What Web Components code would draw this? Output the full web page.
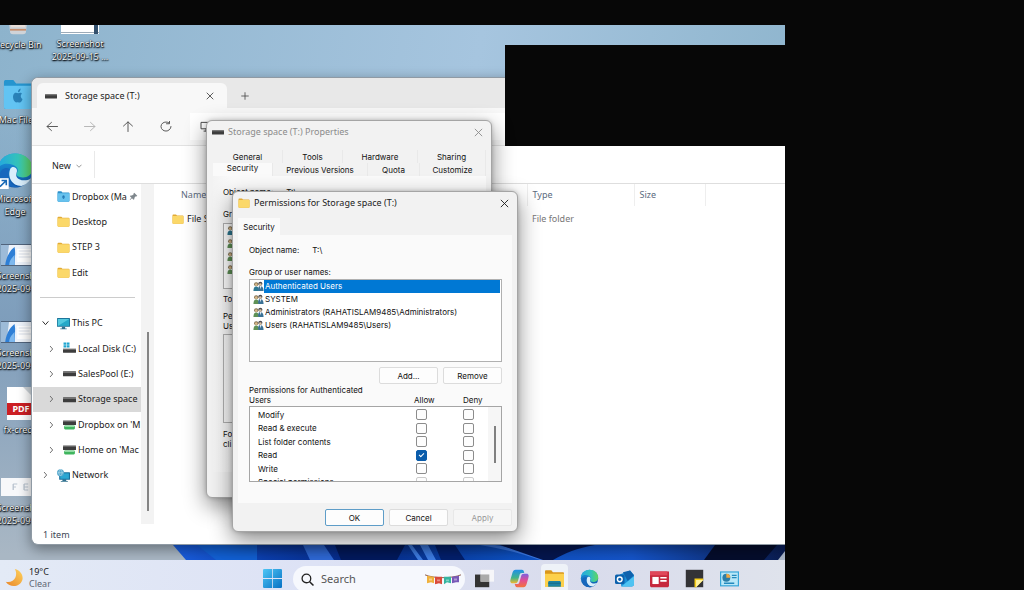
<!DOCTYPE html>
<html lang="en">
<head>
<meta charset="utf-8">
<title>Storage space (T:)</title>
<style>
  html, body { margin: 0; height: 100%; background: #070707; }
  body {
    --ui: "Noto Sans", "Open Sans", sans-serif;
    --classic: Inter, "Liberation Sans", Arial, sans-serif;
    font: 9px/12px var(--ui); color: #1b1b1b; overflow: hidden;
  }
</style>
</head>
<body>
<remote-session></remote-session>

<script>
const define = (name, html, setup) => {
  const tpl = document.createElement('template');
  customElements.define(name, class extends HTMLElement {
    connectedCallback() {
      if (this.shadowRoot) return;
      const root = this.attachShadow({ mode: 'open' });
      tpl.innerHTML = typeof html === 'function' ? html(this) : html;
      root.append(tpl.content.cloneNode(true));
      if (setup) setup(root, this);
    }
  });
};

const edge = `<defs><linearGradient id="a" x1="0" y1="0" x2="1" y2="0"><stop offset="0" stop-color="#23a7e0"/><stop offset=".6" stop-color="#35c4b8"/><stop offset="1" stop-color="#62d65b"/></linearGradient><linearGradient id="b" x1="0" y1="0" x2="0" y2="1"><stop offset="0" stop-color="#1b9de2"/><stop offset="1" stop-color="#0f54a6"/></linearGradient></defs>
<circle cx="12" cy="12" r="11" fill="url(#b)"/><path d="M1.200 10.500C2 4.500 6.500 1 12 1c6.500 0 11 4.500 11 9.500 0 4-3 6-6 6-3.500 0-4.500-1.500-4-2.500 1-1.500 1-3-.2-4.200C11 7.500 4 6 1.200 10.500z" fill="url(#a)"/><path d="M9 11c-2 5 1 11 7 11 2.500-.7 4.500-2.200 5.800-4.500-3 1.500-8 1.200-9-2-.4-1.500.8-2.500.4-4C12.500 9.500 10 9 9 11z" fill="#d9eefb"/><path d="M8.700 11C6 16 9 22 15 22.600 10 24 3 21 2.500 14.500 3 11 6 9.500 8.700 11z" fill="#1767bd"/>`;
const folder = `<path d="M1 4.500C1 3.500 1.500 3 2.500 3H8l2 2h11.500c1 0 1.500.5 1.500 1.500V20c0 1-.5 1.500-1.500 1.500h-19C1.500 21.500 1 21 1 20z" fill="#e3ab35"/><path d="M1 7.500C1 6.500 1.500 6 2.500 6h19c1 0 1.500.5 1.500 1.500V20c0 1-.5 1.500-1.500 1.500h-19C1.500 21.500 1 21 1 20z" fill="#fbd869"/>`;
const thumb = `<rect width="28" height="22" fill="#eef3fa"/><path d="M0 0h6L4 22H0z" fill="#9dbbd8"/><path d="M3 22C4 10 8 5 10 3c1 6 0 12 0 19z" fill="#2e7fd6"/><path d="M6 22c0-6 2-8 4-11v11z" fill="#7db8ee"/><path d="M12 5h14v13H12z" fill="#fff"/><path d="M13 7h12M13 10h8M13 13h10" stroke="#d9e0ea"/><path d="M0 .5h28M0 21.500h28" stroke="#51647c"/>`;
const stroke = (d, c = '#333', w = 1.5) => `<path d="${d}" fill="none" stroke="${c}" stroke-width="${w}" stroke-linecap="round" stroke-linejoin="round"/>`;
const people = c => `<circle cx="7" cy="7" r="4.500" fill="#7a6b4b"/><circle cx="7" cy="8" r="3" fill="#d8b88a"/><path d="M1 22c0-8 3-10 6-10s6 2 6 10z" fill="${c}"/><circle cx="16" cy="6" r="4.500" fill="#4b4a50"/><circle cx="16" cy="7.500" r="2.800" fill="#d9c1a0"/><path d="M11 20c0-7 2-9 5-9s7 2 7 11h-10z" fill="#3a7196"/><path d="M15 11l1.500 7 2-7z" fill="#e8eef4"/>`;
const ICONS = {
  drive: ['0 0 24 24', `<rect x="0" y="8" width="24" height="9" rx="1" fill="#3d3d3d"/><path d="M0 9.500h24" stroke="#8d8d8d" stroke-width="2"/>`],
  sysdrive: ['0 0 24 24', `<path d="M1 1h5v4H1zM7 1h5v4H7zM1 6h5v4H1zM7 6h5v4H7z" fill="#1fa5cf"/><rect y="13" width="24" height="7" rx="1" fill="#3d3d3d"/><path d="M0 13h24" stroke="#8d8d8d" stroke-width="2"/>`],
  netdrive: ['0 0 24 24', `<rect y="5" width="24" height="8" rx="1" fill="#3d3d3d"/><path d="M0 5.500h24" stroke="#8d8d8d" stroke-width="2"/><rect x="2" y="14" width="20" height="7" rx="2" fill="#3fb55e"/><path d="M3 15.500h18" stroke="#97dca8" stroke-width="2"/>`],
  folder: ['0 0 24 24', folder],
  dropbox: ['0 0 24 24', `<path d="M1 4c0-1 .5-1.500 1.500-1.500H8l2 2h11.500c1 0 1.500.5 1.500 1.500v14c0 1-.5 1.500-1.500 1.500h-19C1.500 21.500 1 21 1 20z" fill="#2b8fc9"/><path d="M1 6h22v14c0 1-.5 1.500-1.500 1.500h-19C1.500 21.500 1 21 1 20z" fill="#67c2ee"/><path d="M12 9.500l3 2-3 2-3-2zM9 14l3-1 3 1-3 2.500z" fill="#2277b3"/>`],
  pc: ['0 0 24 24', `<path d="M9 18h6v3h3v1.500H6V21h3z" fill="#31718f"/><rect x="0" y="2" width="24" height="16" rx="1" fill="#1d6f95"/><path d="M1.500 3.500h21v13h-21z" fill="#25a9c8"/><path d="M1.500 3.500h21l-21 13z" fill="#54cadf"/>`],
  network: ['0 0 24 24', `<path d="M10 19h7v3h3v1.500H7V22h3z" fill="#31718f"/><rect x="4" y="6" width="20" height="14" rx="1" fill="#196f9c"/><path d="M6 8h16v10H6z" fill="#2ba6d2"/><circle cx="6.500" cy="7" r="6.500" fill="#55a7cc"/><path d="M1 7h11M6.500 1c-4 4-4 8 0 12M6.500 1c4 4 4 8 0 12" stroke="#c7e8f3" fill="none"/>`],
  pin: ['0 0 24 24', `<path d="M14 2l8 8-2 2-2-.5-3.500 4L14 19l-2 1.500-4-4L3 21l-1-1 4.500-5-4-4L4 9l4 .2L12.500 6 12 4z" fill="#7e868c"/>`],
  usersBlue: ['0 0 24 24', people('#2d7891')],
  users: ['0 0 24 24', people('#5f9156')],
  close: ['0 0 24 24', stroke('M3 3l18 18M21 3L3 21', 'currentColor', 2.4)],
  plus: ['0 0 24 24', stroke('M12 2v20M2 12h20', '#444', 2.4)],
  back: ['0 0 24 24', stroke('M23 12H2M11 3l-9 9 9 9', '#555', 2)],
  forward: ['0 0 24 24', stroke('M1 12h21M13 3l9 9-9 9', '#b5b5b5', 2)],
  up: ['0 0 24 24', stroke('M12 23V2M3 11l9-9 9 9', '#555', 2)],
  refresh: ['0 0 24 24', stroke('M22 12a10 10 0 1 1-4-8M19 0v6h-6', '#555', 2)],
  screen: ['0 0 24 24', stroke('M23 3H2v14h21M8 22h12M12 17v5', '#444', 2)],
  chevDown: ['0 0 24 24', stroke('M3 8l9 9 9-9', 'currentColor', 3)],
  chevRight: ['0 0 24 24', stroke('M8 4l8 8-8 8', '#666', 3)],
  edge: ['0 0 24 24', edge],
  edgeLink: ['0 0 24 24', edge + `<rect x="1" y="17" width="7" height="7" fill="#fff"/><path d="M2.500 22.500L6.500 18.500M3.500 18.500h3v3" fill="none" stroke="#1768b5"/>`],
  thumb: ['0 0 28 22', thumb],
  strip: ['0 0 28 22', `<path d="M0 2h28v18H0z" fill="#f7f8fa"/><path d="M9 8v6M9 8h3M9 11h2M17 8v6M17 8h3M17 11h3M17 14h3" stroke="#b9c3cf" fill="none"/>`],
  doc: ['0 0 38 22', `<path d="M0 0h38v22H0z" fill="#fff"/><path d="M0 20.500h38" stroke="#9dabb8"/><path d="M15 0h16v9H15z" fill="#e7eaee"/><path d="M33 0h4v22h-4z" fill="#33506d"/>`],
  bin: ['0 0 24 24', `<path d="M2 0h20l-2 20c0 2-1 3-3 3H7c-2 0-3-1-3-3z" fill="#cfd3d8"/><path d="M5 4h14v11H5z" fill="#e7dcd6"/><path d="M4 18h16" stroke="#c68d6c" stroke-width="2"/>`],
  mac: ['0 0 32 28', `<path d="M1 3c0-1.500.8-2 2-2h8l3 3h16c1.500 0 2 .8 2 2v19c0 1.500-.8 2-2 2H3c-1.500 0-2-.8-2-2z" fill="#2695cf"/><path d="M1 6h31v19c0 1.500-.8 2-2 2H3c-1.500 0-2-.8-2-2z" fill="#62c4f3"/><path d="M20 13c-1.500-1-3-.2-3.800-.2S13.500 12 12 13c-2 1.600-1.500 5 .3 7.200 1.200 1.500 2.200.7 3.600.7s2.500.8 3.700-.6c.7-.8 1-1.500 1.200-2.200-2.300-1-2.400-3.800-.3-4.900zM16 12c0-2 1.200-3.300 2.800-3.500 0 2-1.200 3.400-2.800 3.500z" fill="#2a82b8"/>`],
  moon: ['0 0 24 24', `<defs><linearGradient id="m" x1="1" y1="0" x2="0" y2="1"><stop offset="0" stop-color="#ffd35c"/><stop offset="1" stop-color="#e8862a"/></linearGradient></defs><path d="M13 0c8 2 12 9 10 15-3 9-16 11-22 2 6 1 11-1 13-6 1.500-4 1-8-1-11z" fill="url(#m)"/>`],
  start: ['0 0 24 24', `<defs><linearGradient id="s" x1="0" y1="0" x2="1" y2="1"><stop offset="0" stop-color="#4ec6f5"/><stop offset="1" stop-color="#0771c4"/></linearGradient></defs><path d="M1 0h10.500v11.500H0V1zM12.500 0H23l1 1v10.500H12.500zM0 12.500h11.500V24H1l-1-1zM12.500 12.500H24V23l-1 1H12.500z" fill="url(#s)"/>`],
  search: ['0 0 24 24', `<circle cx="10" cy="10" r="8" fill="none" stroke="#222" stroke-width="2.400"/><path d="M16 16l7 7" stroke="#222" stroke-width="2.800"/>`],
  bunting: ['0 0 38 14', `<path d="M1 2c9 4 27 4 36 0" stroke="#8a5a4a" fill="none"/><path d="M3 3l7 1v7l-3-1-4 1z" fill="#f0b13c"/><path d="M11 4h7v8l-3-1-4 1z" fill="#d94b3c"/><path d="M20 4h7v7l-4-1-3 2z" fill="#35b5a0"/><path d="M28 4l7-1v7l-3 0-4 1z" fill="#7859b8"/><path d="M5 6h3v2H5zM13 7h3v2h-3zM22 7h3v2h-3zM30 6h3v2h-3z" fill="#fff" opacity=".4"/>`],
  taskview: ['0 0 24 24', `<path d="M0 7h18v16H0z" fill="#333"/><path d="M7 1h17v15H7z" fill="#fafafa" opacity=".85"/><path d="M7 7h11v9H7z" fill="#aaa"/>`],
  copilot: ['0 0 24 24', `<defs><linearGradient id="c" x1="0" y1="0" x2="0" y2="1"><stop offset="0" stop-color="#1f8fe8"/><stop offset=".6" stop-color="#43b48a"/><stop offset="1" stop-color="#f3b72c"/></linearGradient><linearGradient id="d" x1="0" y1="0" x2="0" y2="1"><stop offset="0" stop-color="#7a5fe0"/><stop offset=".5" stop-color="#e24f93"/><stop offset="1" stop-color="#f4743b"/></linearGradient></defs><path d="M7 1h8c2 0 2.500 1.500 3 4h-3c-2 0-2.500 1-3 3l-2 7c-.7 2-1.500 3-4 3H3c-3 0-3-3-2-6l2-7c1-3 2-4 4-4z" fill="url(#c)"/><path d="M17 23H9c-2 0-2.500-1.500-3-4h3c2 0 2.500-1 3-3l2-7c.7-2 1.500-3 4-3h3c3 0 3 3 2 6l-2 7c-1 3-2 4-4 4z" fill="url(#d)"/>`],
  explorer: ['0 0 24 24', `<path d="M0 3c0-1 .5-1.500 1.500-1.500H8L10 4h12.500C23.500 4 24 4.500 24 5.500V22H0z" fill="#d9971b"/><path d="M0 6h24v16.500H0z" fill="#fcd04b"/><path d="M4 22.500V17c0-1.500.7-2 2-2h12c1.500 0 2 .7 2 2v5.500z" fill="#1c83a4"/><path d="M4 18h16" stroke="#15647e"/>`],
  outlook: ['0 0 24 24', `<path d="M6 7l13-5 5 6v11c0 2-1 3-3 3H8z" fill="#1a8fd6"/><path d="M8 22l16-13v10c0 2-1 3-3 3z" fill="#4fc3f2"/><path d="M10 4l9-2 5 6-8 7z" fill="#0f62ad"/><rect x="0" y="7" width="12" height="12" rx="2" fill="#0c61ad"/><circle cx="6" cy="13" r="3" fill="none" stroke="#fff" stroke-width="1.800"/>`],
  news: ['0 0 24 24', `<path d="M0 3h24v18c0 1-1 2-2 2H2c-1 0-2-1-2-2z" fill="#c6283d"/><path d="M0 3h22v5H0z" fill="#e0475a"/><path d="M3 10h8v9H3z" fill="#fff"/><path d="M13 11h8M13 15h8" stroke="#fff" stroke-width="2"/>`],
  notes: ['0 0 24 24', `<path d="M1 1h22v22H1z" fill="#333336"/><path d="M12 12h11v2l-9 9h-2z" fill="#f8cf1c"/><path d="M14 23v-9h9z" fill="#fff3a0"/>`],
  control: ['0 0 24 24', `<path d="M0 3h24v19H0z" fill="#36a5d8"/><path d="M1.500 4.500h21v16h-21z" fill="#b9e8f8"/><circle cx="8" cy="11" r="5" fill="#2c7ea8"/><path d="M8 11V6a5 5 0 0 1 5 5z" fill="#f0a640"/><path d="M15 8h6M15 11h6M5 18h13" stroke="#2489bd" stroke-width="1.600"/>`]
};

/* <ui-icon name="..."> : sized through width/height on the host */
define('ui-icon', el => {
  const [box, art] = ICONS[el.getAttribute('name')];
  return `<style>:host{display:block;flex:none;width:12px;height:12px}svg{display:block;width:100%;height:100%}</style>
  <svg viewBox="${box}" preserveAspectRatio="none" aria-hidden="true">${art}</svg>`;
});

define('desktop-icon', el => `<style>
  :host{display:flex;flex-direction:column;align-items:center;gap:3px;width:64px;text-align:center;color:#f4f7fa;font-size:9px;line-height:13px;
    text-shadow:0 0 1px #000,0 1px 2px #000,1px 1px 1px #234}
  ui-icon{width:${el.getAttribute('w')}px;height:${el.getAttribute('h')}px}
  .art{position:relative;display:block}
  b{position:absolute;left:0;right:0;top:16px;background:#cc1f24;color:#fff;font:700 9px/12px var(--ui);text-shadow:none}
  .paper{width:28px;height:33px;background:linear-gradient(225deg,#cfd5da 8px,#fff 9px)}
  span{white-space:pre-line}
</style><div class="art">${el.getAttribute('icon') === 'pdf' ? '<div class="paper"></div><b>PDF</b>' : `<ui-icon name="${el.getAttribute('icon')}"></ui-icon>`}</div><span><slot></slot></span>`);

define('nav-row', el => `<style>
  :host{display:flex;align-items:center;overflow:hidden;white-space:nowrap;padding-left:${el.hasAttribute('child') ? 15 : 9}px}
  :host([selected]){background:#d9d9d9}
  .chev{flex:none;width:7px;height:8px;margin-right:8px}
  ui-icon[name="chevDown"]{color:#222}
  a{color:inherit;text-decoration:none;display:flex;align-items:center;gap:2px}
  .main{width:13px;height:13px}
  .pin{width:9px;height:9px}
</style>${el.getAttribute('chev') ? `<ui-icon class="chev" name="${el.getAttribute('chev')}"></ui-icon>` : '<i class="chev"></i>'}
<a href="#"><ui-icon class="main" name="${el.getAttribute('icon')}"></ui-icon><slot></slot>${el.hasAttribute('pinned') ? '<ui-icon class="pin" name="pin"></ui-icon>' : ''}</a>`);

define('explorer-window', `<style>
  :host{display:flex;flex-direction:column;background:#fff;border-radius:7px 0 0 7px;overflow:hidden;box-sizing:border-box;
    border:1px solid #8f9aa4;border-right:0;box-shadow:0 4px 14px #0006}
  button{border:0;background:none;padding:0;font:inherit;color:inherit}
  .tabs{display:flex;background:#e8e8e8;height:30px;align-items:flex-end}
  .tab{display:flex;align-items:center;height:25px;width:190px;margin-left:5px;background:#f8f8f8;border-radius:6px 6px 0 0;box-sizing:border-box;padding:0 13px 0 8px}
  .tab span{flex:1;margin-left:8px}
  .tab ui-icon[name=close]{width:8px;height:8px;color:#333}
  .add{height:25px;padding-left:14px}
  .add ui-icon{width:8px;height:8px}
  .nav{display:flex;align-items:center;height:37px;background:#f8f8f8;border-bottom:1px solid #e2e2e2;padding-left:14px;gap:26px}
  .nav ui-icon{width:12px;height:11px}
  .addr{flex:1;height:27px;margin-left:-8px;padding-left:10px;background:#fff;display:flex;align-items:center}
  .cmd{display:flex;height:37px;border-bottom:1px solid #dedede;align-items:center;padding-left:19px}
  .cmd button{display:flex;gap:5px;align-items:center;padding:2px 12px 0 1px;height:27px;box-sizing:border-box;border-right:1px solid #e9e9e9}
  .cmd ui-icon{width:6px;height:6px;color:#777}
  .body{display:flex;flex:1;min-height:0}
  nav{display:grid;grid-auto-rows:1fr;width:108px;height:304px;margin-left:1px;flex:none}
  hr{width:95px;margin:auto 0 auto 7px;border:0;border-top:1px solid #ccc}
  .track{width:13px;flex:none;background:#f3f3f3;display:flex;justify-content:center;padding:148px 0 13px;box-sizing:border-box}
  .track i{width:2px;background:#858585}
  .files{flex:1;padding-left:1px}
  table{border-collapse:collapse;table-layout:fixed;width:100%}
  th{font-weight:400;text-align:left;color:#5c6b80;height:22px;padding:0 5px;border-right:1px solid #eee}
  th:last-child{border:0}
  td{height:26px;padding:0 5px;color:#777}
  th:first-child{padding-left:26px}
  td:first-child{padding-left:17px;color:#222}
  td div{display:flex;gap:3px;align-items:center}
  footer{height:20px;padding:2px 0 0 11px;box-sizing:border-box;color:#3d4654;line-height:18px}
</style>
<div class="tabs"><div class="tab"><ui-icon name="drive"></ui-icon><span>Storage space (T:)</span><button aria-label="Close tab"><ui-icon name="close"></ui-icon></button></div>
<button class="add" aria-label="New tab"><ui-icon name="plus"></ui-icon></button></div>
<div class="nav"><button aria-label="Back"><ui-icon name="back"></ui-icon></button><button aria-label="Forward"><ui-icon name="forward"></ui-icon></button><button aria-label="Up"><ui-icon name="up"></ui-icon></button><button aria-label="Refresh"><ui-icon name="refresh"></ui-icon></button><div class="addr"><ui-icon name="screen"></ui-icon></div></div>
<div class="cmd"><button>New <ui-icon name="chevDown"></ui-icon></button></div>
<div class="body">
  <nav>
    <nav-row icon="dropbox" pinned>Dropbox (Ma</nav-row>
    <nav-row icon="folder">Desktop</nav-row>
    <nav-row icon="folder">STEP 3</nav-row>
    <nav-row icon="folder">Edit</nav-row>
    <hr>
    <nav-row icon="pc" chev="chevDown">This PC</nav-row>
    <nav-row child icon="sysdrive" chev="chevRight">Local Disk (C:)</nav-row>
    <nav-row child icon="drive" chev="chevRight">SalesPool (E:)</nav-row>
    <nav-row child icon="drive" chev="chevRight" selected>Storage space</nav-row>
    <nav-row child icon="netdrive" chev="chevRight">Dropbox on 'M</nav-row>
    <nav-row child icon="netdrive" chev="chevRight">Home on 'Mac</nav-row>
    <nav-row icon="network" chev="chevRight">Network</nav-row>
  </nav>
  <div class="track"><i></i></div>
  <div class="files"><table>
    <colgroup><col style="width:372px"><col style="width:107px"><col style="width:71px"><col></colgroup>
    <thead><tr><th>Name</th><th>Type</th><th>Size</th><th></th></tr></thead>
    <tbody><tr><td><div><ui-icon name="folder"></ui-icon>File S</div></td><td>File folder</td><td></td><td></td></tr></tbody>
  </table></div>
</div>
<footer>1 item</footer>`);

/* dialog frame: title bar, content slot */
define('dialog-window', el => `<style>
  :host{display:flex;flex-direction:column;box-sizing:border-box;width:286px;background:#f2f2f2;border:1px solid #a5a5a5;border-radius:6px;overflow:hidden;
    font:8px/10px var(--classic);color:#111;box-shadow:0 8px 22px #0007,0 0 4px #0003}
  header{display:flex;align-items:center;height:22px;padding:0 8px 0 5px;gap:4px;font:9px/12px var(--ui);color:${el.hasAttribute('inactive') ? '#8b8b8b' : '#1a1a1a'}}
  span{flex:1}
  button{border:0;background:none;padding:0;color:inherit}
  button ui-icon{width:9px;height:9px}
</style><header><ui-icon name="${el.getAttribute('icon')}"></ui-icon><span>${el.getAttribute('caption')}</span><button aria-label="Close"><ui-icon name="close"></ui-icon></button></header><slot></slot>`);

define('user-list', el => `<style>
  :host{display:block;box-sizing:border-box;background:#fff;border:1px solid #b0b0b0;height:${el.getAttribute('height')}px}
  ul{margin:0;padding:0 1px 0 3px;list-style:none}
  li{display:flex;height:13px;align-items:center}
  li span{flex:1;line-height:13px;padding-left:1px}
  li[aria-selected=true] span{background:#0078d4;color:#fff}
  ui-icon{width:11px;height:11px}
</style><ul role="listbox" aria-label="Group or user names">${
  ['Authenticated Users', 'SYSTEM', 'Administrators (RAHATISLAM9485\\Administrators)', 'Users (RAHATISLAM9485\\Users)']
  .map((n, i) => `<li role="option" aria-selected="${i === 0 && el.hasAttribute('highlight')}"><ui-icon name="${i ? 'users' : 'usersBlue'}"></ui-icon><span>${el.hasAttribute('highlight') ? n : ''}</span></li>`).join('')}</ul>`);

define('permission-grid', `<style>
  :host{display:block}
  .head{display:grid;grid-template-columns:1fr 49px 39px;align-items:end}
  .list{display:flex;height:76px;box-sizing:border-box;border:1px solid #a5a5a5;background:#fff;overflow:hidden;margin-top:1px}
  table{border-collapse:collapse;flex:1;height:81px;margin-top:1px;table-layout:fixed}
  td,th{padding:0;font-weight:400;text-align:left;vertical-align:middle}
  th{padding-left:8px}
  input{appearance:none;display:block;position:relative;box-sizing:border-box;width:11px;height:11px;margin:0;border:1px solid #8c8c8c;border-radius:2px;background:#fdfdfd}
  input:checked{background:#0a5cab;border-color:#0a5cab}
  input:checked::after{content:"";position:absolute;left:3px;top:1px;width:2px;height:4px;border:solid #fff;border-width:0 1px 1px 0;transform:rotate(45deg)}
  .dim input{border-color:#ccc}
  .bar{width:13px;background:#f6f6f6;display:flex;justify-content:center;align-items:flex-start;padding-top:19px}
  .bar i{width:2px;height:37px;background:#808080}
</style>
<div class="head"><div>Permissions for Authenticated<br>Users</div><div>Allow</div><div>Deny</div></div>
<div class="list"><table><colgroup><col style="width:166px"><col style="width:47px"><col></colgroup><tbody>${
  ['Modify', 'Read &amp; execute', 'List folder contents', 'Read', 'Write', 'Special permissions'].map((n, i) =>
  `<tr class="${i === 5 ? 'dim' : ''}"><th scope="row">${n}</th><td><input type="checkbox" aria-label="Allow ${n}" ${i === 3 ? 'checked' : ''}></td><td><input type="checkbox" aria-label="Deny ${n}"></td></tr>`).join('')
}</tbody></table><div class="bar"><i></i></div></div>`);

define('properties-pane', `<style>
  :host{display:flex;flex-direction:column;flex:1;padding:7px 5px 25px 6px}
  .row{display:grid;height:13px;text-align:center}
  .r1{grid-template-columns:70px 60px 75px 68px}
  .r2{grid-template-columns:60px 95px 52px 66px}
  button{border:0;padding:0;background:none;font:inherit;color:inherit;border-right:1px solid #e9e9e9}
  .r2 button:first-child{background:#fafafa;padding-bottom:3px}
  .page{flex:1;background:linear-gradient(90deg,#f3f3f3,#fafafa 20px);padding:11px 10px 0}
  p{margin:0}
  .name{display:flex;gap:13px}
  .g{margin-top:12px}
  .to{margin-top:5px}
  .pe{margin-top:7px;width:110px}
  .box{height:89px;border:1px solid #b0b0b0;box-sizing:border-box;margin-top:3px}
  .fo{margin-top:6px}
</style>
<div class="row r1"><button>General</button><button>Tools</button><button>Hardware</button><button>Sharing</button></div>
<div class="row r2"><button>Security</button><button>Previous Versions</button><button>Quota</button><button>Customize</button></div>
<div class="page"><p class="name"><span>Object name:</span><span>T:\\</span></p><p class="g">Gr</p><user-list height="66" style="margin-top:4px"></user-list>
<p class="to">To</p><p class="pe">Pe<br>Us</p><div class="box"></div><p class="fo">Fo<br>cli</p></div>`);

define('permissions-pane', `<style>
  :host{display:flex;flex-direction:column;flex:1;padding:4px 5px 0}
  button{font:inherit;color:inherit}
  .tab{align-self:flex-start;width:42px;height:17px;border:0;padding:0;background:#fafafa}
  .page{flex:1;background:#fafafa;padding:10px 10px 0 11px}
  .name{display:flex;gap:13px}
  .g{margin:12px 0 2px}
  .btns{display:flex;gap:5px;justify-content:flex-end}
  .btns button{width:59px;height:17px;padding:0;border:1px solid #dcdcdc;border-radius:2px;background:#fdfdfd}
  .edit{margin:5px 0 1px}
  footer{height:22px;padding:6px 0 0}
  footer .ok{border-color:#5e9dc8}
  footer button:disabled{color:#999;background:#f6f6f6;border-color:#e8e8e8}
</style>
<button class="tab">Security</button>
<div class="page"><div class="name"><span>Object name:</span><span>T:\\</span></div><div class="g">Group or user names:</div><user-list height="83" highlight></user-list>
<div class="btns edit"><button>Add...</button><button>Remove</button></div><permission-grid></permission-grid></div>
<footer class="btns"><button class="ok">OK</button><button>Cancel</button><button disabled>Apply</button></footer>`);

define('task-bar', `<style>
  :host{display:flex;height:30px;overflow:hidden;background:linear-gradient(90deg,#e3eaf6,#dde2f5 40%,#d9dcec 75%,#dfe3ec);align-items:flex-start}
  button{border:0;padding:0;background:none;display:flex;align-items:center;justify-content:center;flex:none}
  .weather{display:flex;width:251px;padding:6px 0 0 5px;gap:6px;line-height:12px;align-items:center}
  .weather ui-icon{width:18px;height:18px}
  .weather small{font-size:9px;color:#5f6773}
  .app{width:27px;height:29px;margin:4px 8px 0 0;border-radius:4px}
  .app ui-icon{width:19px;height:19px}
  .on{background:#eef2f8}
  .win{margin-right:7px;margin-left:3px}
  label{display:flex;align-items:center;width:172px;height:26px;margin:6px 6px 0 0;border-radius:13px;background:#f6f8fd;box-sizing:border-box;padding:0 3px 0 8px;gap:7px}
  input{flex:1;min-width:0;border:0;background:none;outline:0;padding:0;font:11px/16px var(--ui);color:#555}
  input::placeholder{color:#555;opacity:1}
  label ui-icon{width:13px;height:13px}
  label ui-icon:last-child{width:38px}
</style>
<div class="weather"><ui-icon name="moon"></ui-icon><div>19°C<br><small>Clear</small></div></div>
<button class="app win" aria-label="Start"><ui-icon name="start"></ui-icon></button>
<label><ui-icon name="search"></ui-icon><input type="search" placeholder="Search" aria-label="Search"><ui-icon name="bunting"></ui-icon></label>
${['taskview', 'copilot', 'explorer', 'edge', 'outlook', 'news', 'notes', 'control'].map(n => `<button class="app ${n === 'explorer' ? 'on' : ''}" aria-label="${n}"><ui-icon name="${n}"></ui-icon></button>`).join('')}`);

define('remote-session', `<style>
  :host{display:grid;grid-template:25px minmax(0,1fr) / minmax(0,1fr) 239px;height:100vh;background:#070707}
  .screen{grid-row:2;display:flex;flex-direction:column;overflow:hidden}
  .desk{flex:1;position:relative;overflow:hidden;background:linear-gradient(180deg,#8db3cc00 60px,#7e9dbb 300px,#a9b7c4 530px),linear-gradient(100deg,#8db3cc,#a6c5df 55%,#8ab2ca)}
  .bloom{position:absolute;left:0;bottom:0;width:100%;height:15px}
  .desk > *{position:absolute}
  explorer-window{left:31px;right:0;top:52px;bottom:15px}
  .mask{left:505px;right:0;top:20px;height:101px;background:#070707}
</style>
<div class="screen">
  <div class="desk">
    <svg class="bloom" viewBox="0 0 785 15" preserveAspectRatio="none" aria-hidden="true">
      <defs><linearGradient id="w"><stop offset="0" stop-color="#1a5fe0"/><stop offset=".15" stop-color="#0c3fae"/><stop offset=".3" stop-color="#062a88"/><stop offset=".55" stop-color="#0d50c0"/><stop offset=".75" stop-color="#1554c8"/><stop offset="1" stop-color="#0a1c50"/></linearGradient></defs>
      <path d="M173 0H785V15H186z" fill="url(#w)"/><path d="M197 0h60v15H216z" fill="#1260d4"/><path d="M303 0l7 15h24l-10-15z" fill="#2f6ad8"/><path d="M335 0h70l-8 15h-56z" fill="#031a5e"/><path d="M408 0l10 15h5L412 0zM420 0l8 15h8L428 0z" fill="#3f7fe8"/><path d="M435 0h20l10 15h-24z" fill="#04206e"/><path d="M480 0c20 3 40 8 60 15h10c-20-7-35-12-55-15z" fill="#3a78e4"/><path d="M500 0h95c-18 3-30 8-42 15h-10z" fill="#05164e"/><path d="M715 0h62l-13 15h-60z" fill="#050d2c"/><path d="M778 15l7-9v9z" fill="#aab6c8"/>
    </svg>
    <desktop-icon style="left:-14px;top:-11px" icon="bin" w="24" h="21">Recycle Bin</desktop-icon>
    <desktop-icon style="left:48px;top:-13px" icon="doc" w="38" h="22">Screenshot
2025-09-15 ...</desktop-icon>
    <desktop-icon style="left:-14px;top:54px" icon="mac" w="30" h="31">Mac Files</desktop-icon>
    <desktop-icon style="left:-17px;top:127px" icon="edgeLink" w="38" h="37">Microsoft
Edge</desktop-icon>
    <desktop-icon style="left:-12px;top:219px" icon="thumb" w="38" h="22">Screenshot
2025-09-15</desktop-icon>
    <desktop-icon style="left:-12px;top:296px" icon="thumb" w="38" h="22">Screenshot
2025-09-15</desktop-icon>
    <desktop-icon style="left:-11px;top:362px" icon="pdf">fx-credit</desktop-icon>
    <desktop-icon style="left:-12px;top:451px" icon="strip" w="38" h="22">Screenshot
2025-09-15</desktop-icon>
    <explorer-window></explorer-window>
    <div class="mask"></div>
    <dialog-window style="left:206px;top:95px;height:378px" icon="drive" caption="Storage space (T:) Properties" inactive><properties-pane></properties-pane></dialog-window>
    <dialog-window style="left:232px;top:166px;height:341px" icon="folder" caption="Permissions for Storage space (T:)"><permissions-pane></permissions-pane></dialog-window>
  </div>
  <task-bar></task-bar>
</div>`);
</script>
</body>
</html>
